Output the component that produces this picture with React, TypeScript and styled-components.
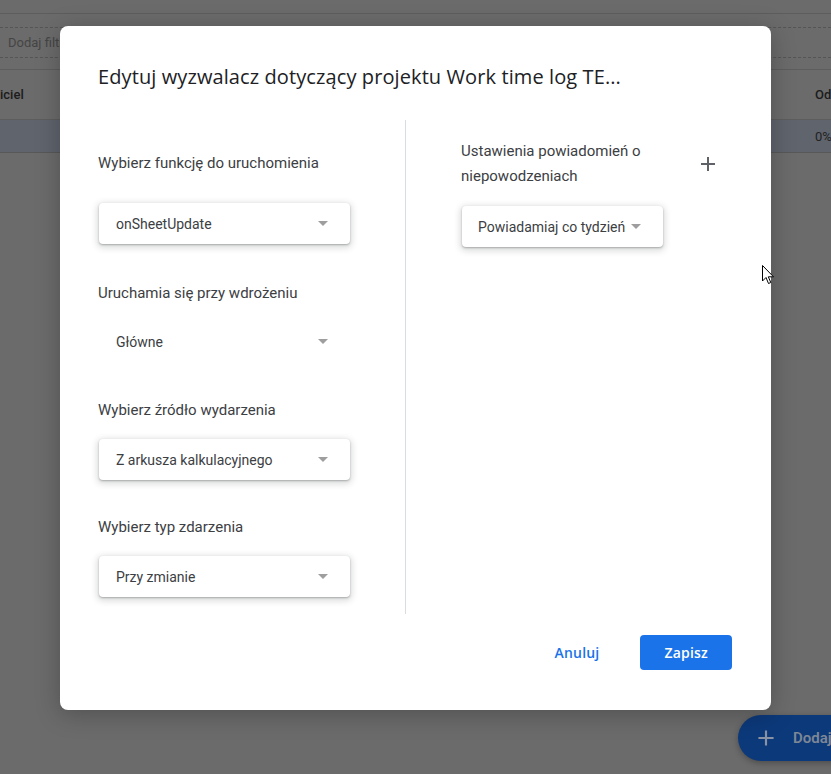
import styled, { createGlobalStyle } from "styled-components";

const GlobalStyle = createGlobalStyle`
  html, body {
    margin: 0;
    padding: 0;
  }

  body {
    background-color: #6b6b6b;
    font-family: Roboto, "Liberation Sans", Arial, sans-serif;
    overflow: hidden;
  }
`;

const Page = styled.div`
  width: 831px;
  height: 774px;
  position: relative;
  overflow: hidden;
`;

const TopBar = styled.div`
  height: 13px;
  border-bottom: 1px solid #5d5d5d;
`;

const FilterBar = styled.div`
  margin-top: 13px;
  height: 29px;
  border-top: 1px dashed #555;
  border-bottom: 1px dashed #555;
  display: flex;
  align-items: center;
  padding-left: 8px;
  font-size: 13px;
  color: #454545;
`;

const TableHead = styled.div`
  margin-top: 11px;
  height: 49px;
  border-top: 1px solid #5d5d5d;
  border-bottom: 1px solid #5d5d5d;
  display: flex;
  justify-content: space-between;
  align-items: center;
  font-size: 13px;
  font-weight: 500;
  color: #1c1c1c;
`;

const TableRow = styled.div`
  height: 32px;
  background-color: #5f646d;
  border-bottom: 1px solid #585858;
  display: flex;
  justify-content: flex-end;
  align-items: center;
  font-size: 13px;
  color: #222;
`;

const Cell = styled.span`
  width: 16px;
  white-space: nowrap;
  overflow: hidden;
`;

const Fab = styled.div`
  position: absolute;
  left: 738px;
  top: 715px;
  height: 46px;
  width: 160px;
  border-radius: 23px;
  background-color: #0c397a;
  box-shadow: 0 2px 6px rgba(0, 0, 0, 0.3);
  display: flex;
  align-items: center;
  gap: 14px;
  padding-left: 15px;
  box-sizing: border-box;
  color: #7d8796;
  font-size: 15px;
  font-weight: 600;
  white-space: nowrap;
`;

const Dialog = styled.div`
  position: absolute;
  top: 26px;
  left: 60px;
  width: 711px;
  height: 684px;
  box-sizing: border-box;
  background-color: #fff;
  border-radius: 8px;
  box-shadow: 0 4px 24px rgba(0, 0, 0, 0.25);
  padding: 36px 39px 40px 38px;
  display: flex;
  flex-direction: column;
`;

const Title = styled.h2`
  margin: 0;
  font-family: "Open Sans", Lato, sans-serif;
  font-size: 20px;
  font-weight: 400;
  line-height: 30px;
  letter-spacing: 0.1px;
  color: #202124;
  white-space: nowrap;
`;

const Body = styled.div`
  margin-top: 28px;
  display: flex;
  height: 494px;
`;

const LeftColumn = styled.div`
  width: 308px;
  border-right: 1px solid #dadce0;
  padding-top: 31px;
  box-sizing: border-box;
`;

const RightColumn = styled.div`
  flex: 1;
  padding: 19px 0 0 55px;
`;

const Field = styled.div<{ $gap: number; $space: number }>`
  margin-top: ${(p) => p.$space}px;
  display: flex;
  flex-direction: column;
  align-items: flex-start;
  gap: ${(p) => p.$gap}px;
`;

const Label = styled.div`
  font-size: 15px;
  line-height: 24px;
  color: #3c4043;
`;

const Select = styled.div<{ $flat?: boolean; $width?: number }>`
  width: ${(p) => (p.$width ? `${p.$width}px` : "auto")};
  height: 41px;
  margin-left: 1px;
  box-sizing: border-box;
  border-radius: 4px;
  background-color: #fff;
  box-shadow: ${(p) =>
    p.$flat
      ? "none"
      : "0 1px 2px rgba(60, 64, 67, 0.35), 0 2px 6px 2px rgba(60, 64, 67, 0.18)"};
  display: flex;
  align-items: center;
  justify-content: space-between;
  padding: 0 22px 0 17px;
  font-size: 14px;
  color: #3c4043;
  white-space: nowrap;
`;

const Caret = styled.span`
  width: 0;
  height: 0;
  border-left: 5px solid transparent;
  border-right: 5px solid transparent;
  border-top: 5px solid #9e9e9e;
  flex-shrink: 0;
`;

const NotifyHeader = styled.div`
  display: flex;
  justify-content: space-between;
  align-items: center;
  padding-right: 12px;
`;

const NotifyLabel = styled(Label)`
  width: 200px;
  line-height: 25px;
`;

const IconButton = styled.button`
  width: 24px;
  height: 24px;
  padding: 0;
  border: none;
  background: none;
  display: flex;
  align-items: center;
  justify-content: center;
`;

const NotifySelect = styled(Select)`
  display: inline-flex;
  margin-top: 17px;
  justify-content: flex-start;
  gap: 6px;
  padding-left: 16px;
`;

const Footer = styled.div`
  margin-top: 21px;
  display: flex;
  justify-content: flex-end;
  align-items: center;
  gap: 25px;
`;

const Button = styled.button<{ $primary?: boolean }>`
  height: 35px;
  padding: 0 ${(p) => (p.$primary ? 24 : 16)}px;
  min-width: ${(p) => (p.$primary ? 91 : 0)}px;
  border: none;
  border-radius: 4px;
  background-color: ${(p) => (p.$primary ? "#1a73e8" : "transparent")};
  color: ${(p) => (p.$primary ? "#fff" : "#1a73e8")};
  font-family: "Open Sans", Roboto, sans-serif;
  font-size: 14px;
  font-weight: 600;
  letter-spacing: 0.2px;
`;

const Cursor = styled.svg`
  position: absolute;
  left: 762px;
  top: 265px;
`;

const PlusIcon = ({ color, size }: { color: string; size: number }) => (
  <svg width={size} height={size} viewBox="0 0 24 24">
    <path d="M19 13h-6v6h-2v-6H5v-2h6V5h2v6h6v2z" fill={color} />
  </svg>
);

type FieldDef = {
  label: string;
  value: string;
  gap: number;
  space: number;
  flat?: boolean;
};

const fields: FieldDef[] = [
  { label: "Wybierz funkcję do uruchomienia", value: "onSheetUpdate", gap: 28, space: 0 },
  { label: "Uruchamia się przy wdrożeniu", value: "Główne", gap: 16, space: 37, flat: true },
  { label: "Wybierz źródło wydarzenia", value: "Z arkusza kalkulacyjnego", gap: 17, space: 36 },
  { label: "Wybierz typ zdarzenia", value: "Przy zmianie", gap: 17, space: 35 },
];

export default function App() {
  return (
    <Page>
      <GlobalStyle />
      <TopBar />
      <FilterBar>Dodaj filtr</FilterBar>
      <TableHead>
        <span>iciel</span>
        <Cell>Odtworzenia</Cell>
      </TableHead>
      <TableRow>
        <Cell>0%</Cell>
      </TableRow>

      <Fab>
        <PlusIcon color="#8a93a3" size={26} />
        Dodaj regułę
      </Fab>

      <Dialog>
        <Title>Edytuj wyzwalacz dotyczący projektu Work time log TE...</Title>
        <Body>
          <LeftColumn>
            {fields.map((f) => (
              <Field key={f.label} $gap={f.gap} $space={f.space}>
                <Label>{f.label}</Label>
                <Select $width={251} $flat={f.flat}>
                  {f.value}
                  <Caret />
                </Select>
              </Field>
            ))}
          </LeftColumn>
          <RightColumn>
            <NotifyHeader>
              <NotifyLabel>Ustawienia powiadomień o niepowodzeniach</NotifyLabel>
              <IconButton>
                <PlusIcon color="#5f6368" size={24} />
              </IconButton>
            </NotifyHeader>
            <NotifySelect>
              Powiadamiaj co tydzień
              <Caret />
            </NotifySelect>
          </RightColumn>
        </Body>
        <Footer>
          <Button>Anuluj</Button>
          <Button $primary>Zapisz</Button>
        </Footer>
      </Dialog>

      <Cursor width="13" height="20" viewBox="0 0 13 20">
        <path
          d="M0.5 0.5 L0.5 16 L4 12.5 L6.5 18.5 L8.8 17.5 L6.3 11.8 L11.5 11.8 Z"
          fill="#fff"
          stroke="#000"
          strokeWidth="1"
        />
      </Cursor>
    </Page>
  );
}
